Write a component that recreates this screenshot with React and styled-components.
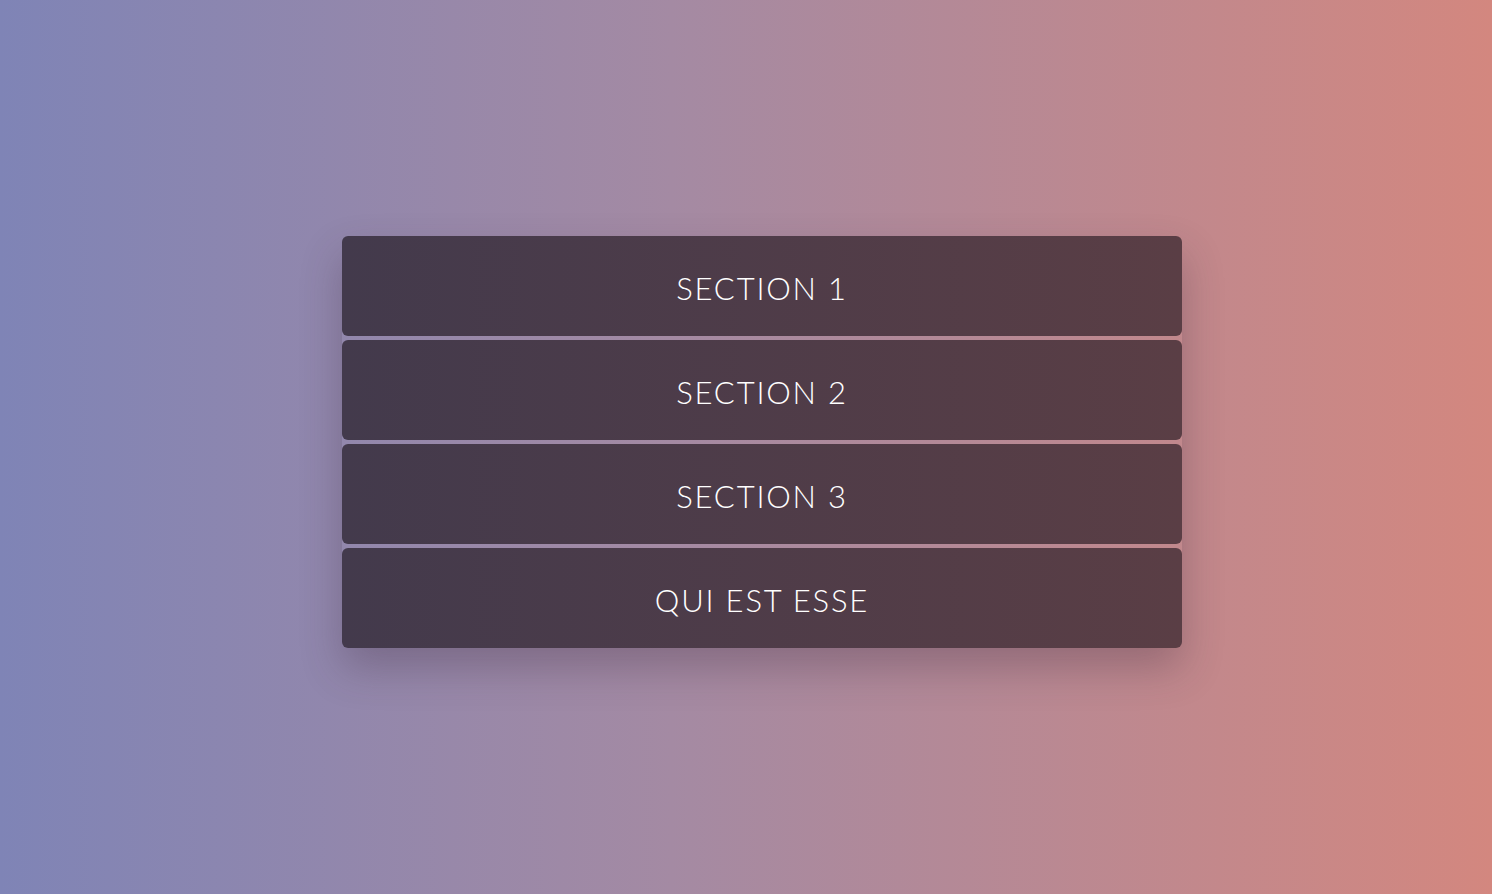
import React from "react";
import styled, { createGlobalStyle } from "styled-components";

const GlobalStyle = createGlobalStyle`
  html, body {
    margin: 0;
    padding: 0;
    height: 100%;
  }
  body {
    font-family: Lato, "Open Sans", sans-serif;
    background: linear-gradient(90deg, #7f84b6 0%, #a48aa3 45%, #d3877f 100%);
    min-height: 894px;
  }
`;

const Page = styled.main`
  height: 894px;
  display: flex;
  justify-content: center;
  padding: 236px 0 0 32px;
  box-sizing: border-box;
`;

const Accordion = styled.ul`
  list-style: none;
  margin: 0;
  padding: 0;
  width: 840px;
  height: fit-content;
  display: flex;
  flex-direction: column;
  gap: 4px;
  border-radius: 6px;
  box-shadow: 0 20px 40px rgba(60, 40, 60, 0.3);
`;

const Item = styled.li`
  height: 100px;
  border-radius: 6px;
  background: linear-gradient(90deg, #433a4c 0%, #5a3e45 100%);
  display: flex;
  align-items: center;
  justify-content: center;
  padding-top: 4px;
  box-sizing: border-box;
  color: #fff;
  font-size: 31px;
  font-weight: 300;
  letter-spacing: 1.8px;
  text-transform: uppercase;
  cursor: pointer;
`;

const sections = ["Section 1", "Section 2", "Section 3", "Qui est esse"];

export default function App() {
  return (
    <>
      <GlobalStyle />
      <Page>
        <Accordion>
          {sections.map((title) => (
            <Item key={title}>{title}</Item>
          ))}
        </Accordion>
      </Page>
    </>
  );
}
